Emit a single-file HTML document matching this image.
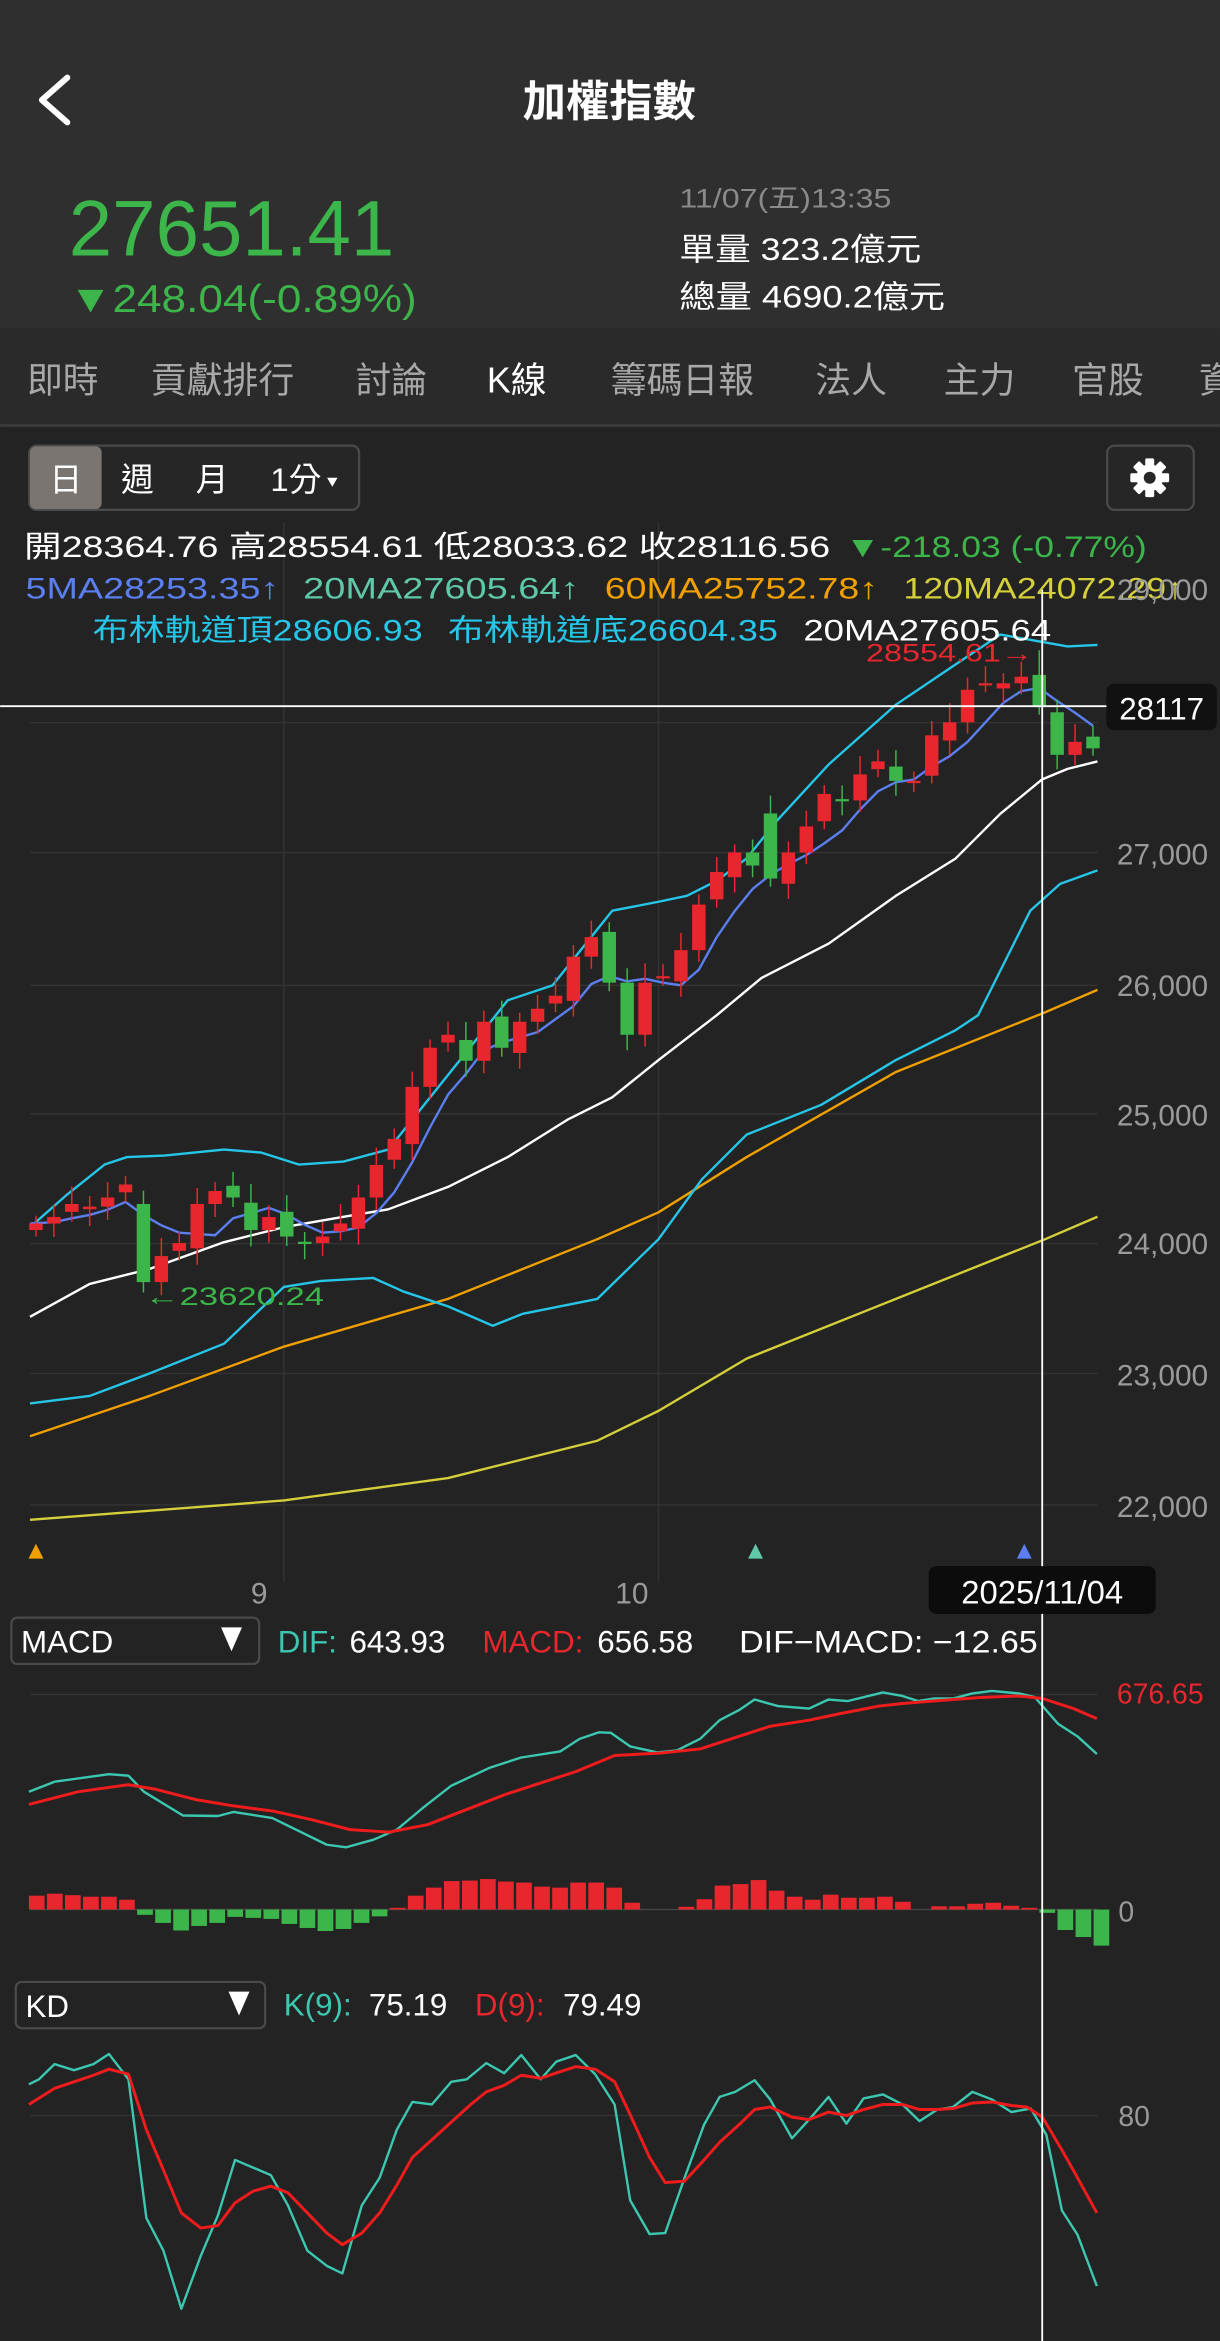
<!DOCTYPE html>
<html><head><meta charset="utf-8"><style>
html,body{margin:0;padding:0;background:#232323;}
svg{display:block}
text{font-family:"Liberation Sans","Noto Sans CJK TC",sans-serif;}
</style></head><body>
<svg id="s" width="1220" height="2341" viewBox="0 0 817 1568" xmlns="http://www.w3.org/2000/svg">
<rect x="0" y="0" width="817" height="1568" fill="#232323"/>
<rect x="0" y="0" width="817" height="220" fill="#2f2f2f"/>
<rect x="0" y="220" width="817" height="65" fill="#2a2a2a"/>
<rect x="0" y="284" width="817" height="2" fill="#3a3a3a"/>
<path d="M45 52 L28 67 L45 82" fill="none" stroke="#fff" stroke-width="4" stroke-linecap="round" stroke-linejoin="round"/>
<text x="408" y="78" fill="#fff" font-size="29" font-weight="bold" text-anchor="middle">加權指數</text>
<text x="46" y="171" fill="#3cb54a" font-size="53" textLength="218" lengthAdjust="spacingAndGlyphs">27651.41</text>
<text x="46" y="209" fill="#3cb54a" font-size="26" textLength="233" lengthAdjust="spacingAndGlyphs">▼248.04(-0.89%)</text>
<text x="455" y="139" fill="#8a8a8a" font-size="18" textLength="142" lengthAdjust="spacingAndGlyphs">11/07(五)13:35</text>
<text x="455" y="174" fill="#fff" font-size="21" textLength="162" lengthAdjust="spacingAndGlyphs">單量 323.2億元</text>
<text x="455" y="206" fill="#fff" font-size="21" textLength="178" lengthAdjust="spacingAndGlyphs">總量 4690.2億元</text>
<g font-size="24" fill="#a8a8a8">
<text x="18" y="263">即時</text><text x="101" y="263">貢獻排行</text><text x="238" y="263">討論</text>
<text x="326" y="263" fill="#fff">K線</text><text x="409" y="263">籌碼日報</text><text x="546" y="263">法人</text>
<text x="632" y="263">主力</text><text x="718" y="263">官股</text><text x="803" y="263">資</text></g>
<rect x="19.5" y="298.5" width="221" height="43" rx="5" fill="#262626" stroke="#4a4a4a" stroke-width="1.5"/>
<rect x="20" y="299" width="48" height="42" rx="4" fill="#7a7570"/>
<g font-size="22" fill="#fff"><text x="33" y="329">日</text><text x="81" y="329">週</text><text x="131" y="329">月</text><text x="181" y="329">1分</text></g>
<path d="M219 320 L226 320 L222.5 326 Z" fill="#fff"/>
<rect x="741.5" y="298.5" width="58" height="43" rx="5" fill="#262626" stroke="#4a4a4a" stroke-width="1.5"/>
<g transform="translate(770,320)" fill="#fff">
<circle r="9"/>
<g id="teeth"><rect x="-3" y="-13" width="6" height="6" rx="1"/></g>
<use href="#teeth" transform="rotate(45)"/><use href="#teeth" transform="rotate(90)"/><use href="#teeth" transform="rotate(135)"/>
<use href="#teeth" transform="rotate(180)"/><use href="#teeth" transform="rotate(225)"/><use href="#teeth" transform="rotate(270)"/><use href="#teeth" transform="rotate(315)"/>
<circle r="4" fill="#262626"/></g>
<g id="grid" stroke="#333" stroke-width="1"></g>
<g id="chart"></g>
<g font-size="20">
<text x="16" y="373" fill="#fff" textLength="540" lengthAdjust="spacingAndGlyphs">開28364.76 高28554.61 低28033.62 收28116.56</text>
<text x="566" y="373" fill="#3cb54a" textLength="202" lengthAdjust="spacingAndGlyphs">▼-218.03 (-0.77%)</text>
<text x="17" y="401" fill="#5b7ff0" textLength="170" lengthAdjust="spacingAndGlyphs">5MA28253.35↑</text>
<text x="203" y="401" fill="#5fc8a8" textLength="185" lengthAdjust="spacingAndGlyphs">20MA27605.64↑</text>
<text x="405" y="401" fill="#f0a000" textLength="183" lengthAdjust="spacingAndGlyphs">60MA25752.78↑</text>
<text x="605" y="401" fill="#d4cf3a" textLength="188" lengthAdjust="spacingAndGlyphs">120MA24072.29↑</text>
<text x="62" y="429" fill="#26c6e8" textLength="221" lengthAdjust="spacingAndGlyphs">布林軌道頂28606.93</text>
<text x="300" y="429" fill="#26c6e8" textLength="221" lengthAdjust="spacingAndGlyphs">布林軌道底26604.35</text>
<text x="538" y="429" fill="#fff" textLength="166" lengthAdjust="spacingAndGlyphs">20MA27605.64</text>
</g>
<g font-size="20" fill="#9a9a9a">
<text x="748" y="402">29,000</text>
<text x="748" y="579">27,000</text><text x="748" y="667">26,000</text><text x="748" y="754">25,000</text>
<text x="748" y="840">24,000</text><text x="748" y="928">23,000</text><text x="748" y="1016">22,000</text>
<text x="168" y="1074">9</text><text x="412" y="1074">10</text>
</g>
<text x="580" y="443" fill="#e8262d" font-size="17" textLength="112" lengthAdjust="spacingAndGlyphs">28554.61→</text>
<text x="97" y="874" fill="#3cb54a" font-size="17" textLength="120" lengthAdjust="spacingAndGlyphs">←23620.24</text>
<line x1="0" y1="473" x2="745" y2="473" stroke="#fff" stroke-width="1.2"/>
<rect x="741" y="458" width="74" height="31" rx="5" fill="#111"/>
<text x="778" y="482" fill="#fff" font-size="21" text-anchor="middle">28117</text>
<path d="M19 1044 L24 1034 L29 1044Z" fill="#f0a000"/>
<path d="M501 1044 L506 1034 L511 1044Z" fill="#5fc8a8"/>
<path d="M681 1044 L686 1034 L691 1044Z" fill="#5b7ff0"/>
<line x1="698" y1="395" x2="698" y2="1568" stroke="#fff" stroke-width="1.2"/>
<rect x="622" y="1049" width="152" height="32" rx="5" fill="#0c0c0c"/>
<text x="698" y="1074" fill="#fff" font-size="22" text-anchor="middle">2025/11/04</text>
<rect x="7.5" y="1083.5" width="166" height="31" rx="4" fill="#232323" stroke="#4a4a4a" stroke-width="1.5"/>
<text x="14" y="1107" fill="#fff" font-size="21">MACD</text>
<path d="M148 1090 L162 1090 L155 1106Z" fill="#fff"/>
<g font-size="21">
<text x="186" y="1107" fill="#3cc8b0">DIF:</text><text x="234" y="1107" fill="#fff">643.93</text>
<text x="323" y="1107" fill="#e8262d">MACD:</text><text x="400" y="1107" fill="#fff">656.58</text>
<text x="495" y="1107" fill="#fff" textLength="200" lengthAdjust="spacingAndGlyphs">DIF−MACD: −12.65</text>
</g>
<text x="748" y="1141" fill="#e8262d" font-size="19">676.65</text>
<text x="749" y="1287" fill="#9a9a9a" font-size="19">0</text>
<rect x="10.5" y="1327.5" width="167" height="31" rx="4" fill="#232323" stroke="#4a4a4a" stroke-width="1.5"/>
<text x="17" y="1351" fill="#fff" font-size="21">KD</text>
<path d="M153 1334 L167 1334 L160 1350Z" fill="#fff"/>
<g font-size="21">
<text x="190" y="1350" fill="#3cc8b0">K(9):</text><text x="247" y="1350" fill="#fff">75.19</text>
<text x="318" y="1350" fill="#e8262d">D(9):</text><text x="377" y="1350" fill="#fff">79.49</text>
</g>
<text x="749" y="1424" fill="#9a9a9a" font-size="19">80</text>
</svg>
<script>
var NS="http://www.w3.org/2000/svg",chart=document.getElementById('chart'),grid=document.getElementById('grid');
function el(p,t,a){var e=document.createElementNS(NS,t);for(var k in a)e.setAttribute(k,a[k]);p.appendChild(e);return e;}
function yp(p){return 571-(p-27000)*0.0872;}
// grid
[484,571,660,746,833,920,1008].forEach(function(y){el(grid,'line',{x1:20,y1:y,x2:735,y2:y});});
el(grid,'line',{x1:20,y1:1135,x2:735,y2:1135});el(grid,'line',{x1:20,y1:1417,x2:735,y2:1417});
[190,441].forEach(function(x){el(grid,'line',{x1:x,y1:350,x2:x,y2:1060});});
function poly(pts,col,w){el(chart,'polyline',{points:pts.map(function(p){return p[0]+','+p[1]}).join(' '),fill:'none',stroke:col,'stroke-width':w||1.6,'stroke-linejoin':'round'});}
// hand lines
poly([[20,1018],[190,1005],[300,990],[400,965],[441,945],[500,910],[600,870],[700,830],[735,815]],'#d4cf3a',1.6);
poly([[20,962],[100,935],[190,902],[300,870],[400,830],[441,812],[500,775],[600,718],[700,678],[735,663]],'#f0a000',1.6);
poly([[20,940],[60,935],[100,920],[150,900],[190,862],[215,858],[250,856],[270,865],[300,875],[330,888],[350,880],[400,870],[441,830],[470,790],[500,760],[550,740],[600,710],[640,690],[655,680],[690,610],[710,592],[735,583]],'#26c6e8',1.6);
poly([[20,822],[45,800],[70,780],[85,775],[110,774],[150,770],[175,772],[200,780],[230,778],[260,770],[300,720],[340,670],[370,660],[390,635],[410,610],[441,604],[460,600],[480,590],[500,575],[520,550],[555,512],[600,472],[640,445],[670,425],[698,430],[715,433],[735,432]],'#26c6e8',1.6);
poly([[20,882],[60,860],[100,850],[150,832],[190,822],[230,815],[260,810],[300,795],[340,775],[380,750],[410,735],[441,710],[480,680],[510,655],[555,632],[600,600],[640,575],[670,545],[698,522],[715,515],[735,510]],'#fff',1.6);
// candles
var C=[24150,24200,24300,24280,24350,24450,23700,23900,24000,24300,24400,24350,24100,24200,24050,24000,24050,24150,24350,24600,24800,25200,25500,25600,25400,25700,25500,25700,25800,25900,26200,26350,26000,25600,26000,26050,26250,26600,26850,27000,26900,26800,27000,27200,27450,27400,27600,27700,27550,27550,27900,28000,28250,28300,28300,28350,28117,27750,27850,27800];
var ma5=[];
for(var i=0;i<C.length;i++){var s=0;for(var j=0;j<5;j++)s+=C[Math.max(0,i-j)];ma5.push([24+12*i,yp(s/5)]);}
ma5[0][0]=20;
poly(ma5,'#5b7ff0',1.6);
for(var i=0;i<C.length;i++){
 var o=i==0?24100:C[i-1]+((i%3)-1)*40;if(i==6)o=24300;if(i==56)o=28364;if(i==41)o=27300;if(i==33)o=26000;
 var c=C[i],x=24+12*i,up=c>=o,col=up?'#e8262d':'#3cb54a';
 var hi=Math.max(o,c)+60+(i*37%90),lo=Math.min(o,c)-50-(i*53%80);if(i==6)lo=23620;if(i==56)hi=28554;
 el(chart,'line',{x1:x,y1:yp(hi),x2:x,y2:yp(lo),stroke:col,'stroke-width':1});
 var t=yp(Math.max(o,c)),b=yp(Math.min(o,c));if(b-t<1.5)b=t+1.5;
 el(chart,'rect',{x:x-4.5,y:t,width:9,height:b-t,fill:col});
}
// MACD
function tr(a,f){return a.map(function(p){return [p[0]*0.521,f(p[1])];});}
function my(y){return 1038+y*0.3378;}
poly(tr([[37,480],[70,460],[140,445],[165,448],[185,480],[235,527],[280,528],[300,520],[350,532],[420,585],[445,590],[480,575],[510,555],[545,510],[580,468],[630,432],[670,412],[720,400],[745,375],[770,362],[785,363],[810,390],[845,402],[870,398],[900,375],[925,338],[950,318],[970,297],[1000,310],[1040,315],[1065,297],[1090,300],[1135,283],[1160,290],[1180,300],[1200,295],[1225,295],[1250,285],[1275,280],[1310,285],[1330,292],[1360,345],[1385,370],[1410,405]],my),'#3cc8b0',1.6);
poly(tr([[37,505],[100,480],[165,466],[200,475],[250,495],[300,508],[350,518],[400,535],[450,555],[500,560],[550,545],[600,515],[650,485],[700,460],[740,440],[790,408],[850,403],[900,395],[950,370],[990,350],[1040,338],[1080,325],[1130,310],[1160,305],[1200,300],[1260,293],[1310,290],[1340,295],[1380,315],[1410,335]],my),'#ee1c1c',2);
el(chart,'line',{x1:20,y1:1279,x2:735,y2:1279,stroke:'#444','stroke-width':1});
var H=[686,682,685,688,688,694,724,740,755,746,740,728,730,732,742,750,756,752,740,727,710,686,670,657,656,653,658,660,668,670,660,660,670,700,714,714,708,693,666,663,655,676,688,694,684,690,690,688,698,714,707,707,702,700,706,710,720,754,768,785];
for(var i=0;i<H.length;i++){var zx=37+23.2*i,x=zx*0.521,y=my(H[i]),z=1279,col=H[i]<714?'#e8262d':'#3cb54a';if(H[i]==714)continue;
 el(chart,'rect',{x:x,y:Math.min(y,z),width:10.5,height:Math.abs(y-z),fill:col});}
// KD
poly(tr([[37,1060],[50,1050],[70,1020],[95,1032],[120,1020],[140,1000],[165,1050],[188,1325],[210,1390],[233,1505],[258,1400],[280,1320],[302,1210],[348,1240],[370,1300],[395,1390],[420,1420],[440,1435],[465,1300],[488,1245],[510,1150],[530,1095],[555,1100],[580,1055],[600,1050],[625,1018],[648,1038],[670,1002],[695,1050],[715,1015],[740,1002],[765,1040],[790,1100],[810,1290],[835,1357],[855,1355],[880,1245],[905,1140],[925,1085],[945,1075],[970,1052],[990,1090],[1018,1167],[1040,1130],[1065,1085],[1088,1138],[1110,1088],[1135,1080],[1160,1100],[1182,1133],[1205,1110],[1225,1105],[1250,1075],[1275,1090],[1300,1115],[1325,1108],[1345,1160],[1365,1310],[1385,1358],[1410,1460]],my),'#3cc8b0',1.6);
poly(tr([[37,1100],[70,1068],[95,1055],[120,1042],[140,1030],[165,1040],[188,1150],[210,1230],[233,1315],[258,1345],[280,1340],[302,1295],[325,1272],[348,1262],[370,1275],[395,1315],[420,1355],[440,1378],[465,1355],[488,1315],[510,1260],[530,1205],[555,1170],[580,1135],[605,1100],[625,1075],[648,1062],[670,1042],[695,1048],[720,1035],[740,1025],[765,1030],[790,1055],[810,1120],[835,1205],[855,1255],[880,1252],[905,1210],[925,1175],[950,1140],[970,1110],[990,1105],[1018,1125],[1040,1130],[1065,1115],[1088,1122],[1110,1110],[1135,1100],[1160,1100],[1182,1110],[1205,1110],[1225,1108],[1250,1097],[1275,1095],[1300,1102],[1320,1105],[1340,1125],[1365,1190],[1385,1245],[1410,1315]],my),'#ee1c1c',2);
</script>
</body></html>
